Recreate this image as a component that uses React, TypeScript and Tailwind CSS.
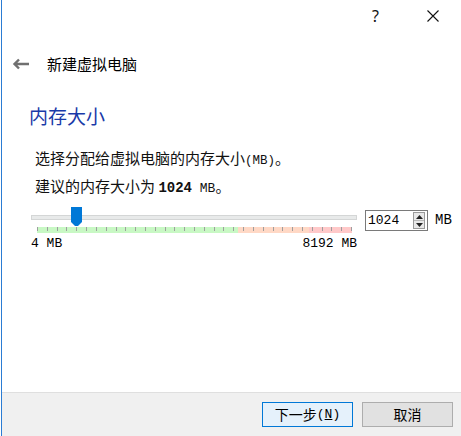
import React from "react";

const cjk = '"Noto Sans CJK SC", "Noto Sans", sans-serif';
const mono = '"Liberation Mono", "Noto Sans CJK SC", monospace';

function TickBar() {
  const ticks = Array.from({ length: 33 }, (_, i) => i);
  return (
    <div className="relative ml-[6px] mr-[5px] flex h-[6px]">
      <div className="h-full w-[201px] bg-[#c8f8c4]" />
      <div className="h-full w-[71px] bg-[#ffd8c5]" />
      <div className="h-full flex-1 bg-[#ffc9c9]" />
      {/* tick marks over the coloured band */}
      <div className="absolute inset-x-0 top-0 flex justify-between">
        {ticks.map((t) => (
          <div key={t} className="h-[4px] w-px bg-[#9e9e9e]" />
        ))}
      </div>
    </div>
  );
}

function SpinBox() {
  return (
    <div className="flex h-[21px] w-[63px] items-center border border-[#7a7a7a] bg-white pl-[2px] pr-[2px]">
      <span className="flex-1 text-[13px] leading-[19px] text-black" style={{ fontFamily: mono }}>
        1024
      </span>
      <div className="flex h-[17px] w-[12px] flex-col border border-[#9a9a9a] bg-[#e8e8e8]">
        <div className="flex flex-1 items-center justify-center border-b border-[#b8b8b8]">
          <svg width="7" height="4" viewBox="0 0 7 4">
            <path d="M0 4 L3.5 0 L7 4 Z" fill="#222" />
          </svg>
        </div>
        <div className="flex flex-1 items-center justify-center">
          <svg width="7" height="4" viewBox="0 0 7 4">
            <path d="M0 0 L3.5 4 L7 0 Z" fill="#222" />
          </svg>
        </div>
      </div>
    </div>
  );
}

export default function App() {
  return (
    <div className="h-[436px] w-[461px] bg-white pl-px">
      <div className="flex h-full flex-col border-l border-[#2b7cd3]">
        {/* Title bar */}
        <div className="flex h-[30px] items-start justify-end pr-[22px] pt-[6px]">
          <span className="text-[16px] leading-[20px] text-[#111]" style={{ fontFamily: '"Noto Sans", sans-serif' }}>
            ?
          </span>
          <svg className="ml-[48px] mt-[4px]" width="12" height="12" viewBox="0 0 12 12">
            <path d="M0.5 0.5 L11.5 11.5 M11.5 0.5 L0.5 11.5" stroke="#111" strokeWidth="1.1" />
          </svg>
        </div>

        <div className="flex-1">
          {/* Wizard header */}
          <div className="mt-[24px] flex h-[20px] items-center">
            <svg className="ml-[10px]" width="17" height="12" viewBox="0 0 17 12">
              <path d="M2.5 6 H17 M7 1.5 L2.5 6 L7 10.5" stroke="#707070" strokeWidth="2.4" fill="none" />
            </svg>
            <span className="ml-[18px] text-[15px] leading-[20px] text-black" style={{ fontFamily: cjk }}>
              新建虚拟电脑
            </span>
          </div>

          <div className="mt-[32px] h-[20px] pl-[27px] text-[19px] leading-[20px] text-[#1a3aa8]" style={{ fontFamily: cjk }}>
            内存大小
          </div>

          <div className="pl-[33px] text-[15px] text-[#111]" style={{ fontFamily: cjk }}>
            <div className="mt-[22px] h-[20px] leading-[20px]">
              选择分配给虚拟电脑的内存大小
              <span className="text-[12.5px]" style={{ fontFamily: mono }}>(MB)</span>。
            </div>
            <div className="mt-[8px] h-[20px] leading-[20px]">
              建议的内存大小为{" "}
              <span className="text-[14px] font-bold" style={{ fontFamily: mono }}>1024</span>
              <span className="text-[13px]" style={{ fontFamily: mono }}> MB</span>。
            </div>
          </div>

          {/* Slider row */}
          <div className="mt-[11px] flex items-start pl-[29px]">
            <div className="w-[326px]">
              <div className="relative flex h-[20px] items-center">
                <div className="h-[5px] w-full border border-[#d4d6d6] bg-[#e8eaea]" />
                <svg className="absolute left-[40px] top-0" width="11" height="20" viewBox="0 0 11 20">
                  <path d="M0 0 H11 V15 L7 19 H4 L0 15 Z" fill="#0078d7" />
                </svg>
              </div>
              <TickBar />
              <div
                className="mt-[4px] flex h-[14px] items-center justify-between text-[13px] leading-[14px] text-black"
                style={{ fontFamily: mono }}
              >
                <span>4 MB</span>
                <span>8192 MB</span>
              </div>
            </div>
            <div className="ml-[8px] mt-[3px]">
              <SpinBox />
            </div>
            <span
              className="ml-[7px] mt-[3px] text-[14px] leading-[21px] text-black"
              style={{ fontFamily: mono }}
            >
              MB
            </span>
          </div>
        </div>

        {/* Footer */}
        <div className="flex h-[44px] justify-end gap-[9px] border-t border-[#dfdfdf] bg-[#f0f0f0] pr-[8px] pt-[9px]">
          <button
            className="flex h-[25px] w-[91px] items-center justify-center border border-[#0078d7] bg-[#e5f1fb] text-[14px] text-black"
            style={{ fontFamily: cjk }}
          >
            下一步
            <span style={{ fontFamily: mono }} className="text-[13px]">
              (<span className="underline">N</span>)
            </span>
          </button>
          <button
            className="flex h-[25px] w-[91px] items-center justify-center border border-[#adadad] bg-[#e1e1e1] text-[14px] text-black"
            style={{ fontFamily: cjk }}
          >
            取消
          </button>
        </div>
      </div>
    </div>
  );
}
